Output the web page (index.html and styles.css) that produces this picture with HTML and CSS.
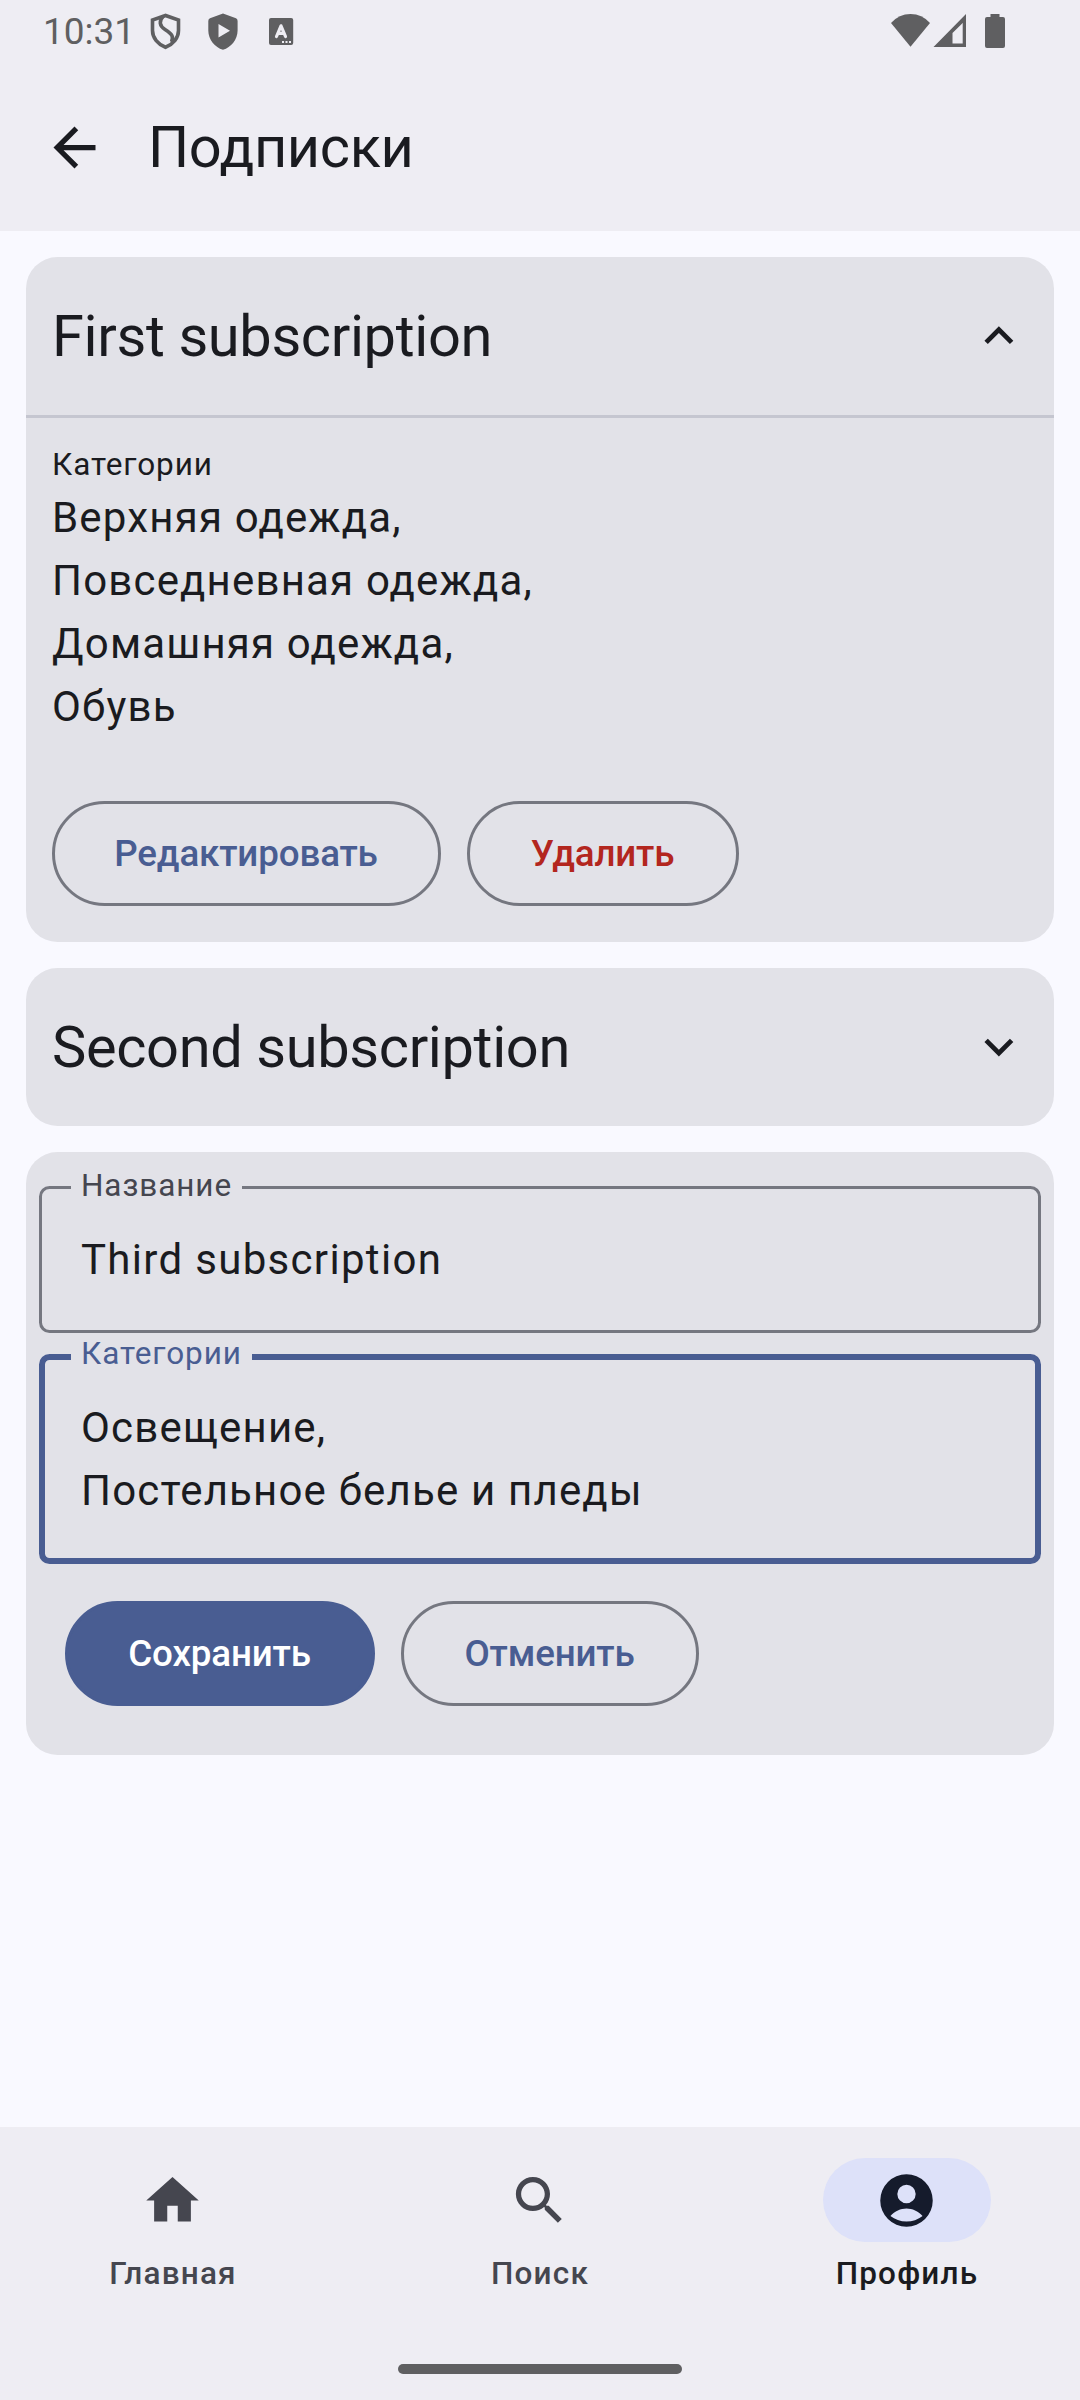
FILE: index.html
```html
<!DOCTYPE html>
<html lang="ru">
<head>
<meta charset="utf-8">
<title>Подписки</title>
<link rel="stylesheet" href="styles.css">
</head>
<body>
<div class="screen">
  <header class="top">
    <div class="status">
      <span class="clock">10:31</span>
      <svg class="status-left" width="160" height="40" viewBox="145 10 160 40" fill="#5f5f61">
        <path d="M165.500 15.500 152.500 20V30.500C152.500 38 158 44.500 165.500 47.300 173 44.500 178.500 38 178.500 30.500V20Z" fill="none" stroke="#5f5f61" stroke-width="3.600"/>
        <path d="M163.500 16C158.500 21 159.500 26 165 29.500 172 34 174 36.500 171.500 42" fill="none" stroke="#5f5f61" stroke-width="3.600"/>
        <path fill-rule="evenodd" d="M223 13.500 236 18.300Q237.600 19 237.600 21V30.500C237.600 39.500 231 47.500 223 49.800 215 47.500 208.300 39.500 208.300 30.500V21Q208.300 19 210 18.300ZM218.500 24V37.500L230 30.800Z"/>
        <rect x="269" y="18" width="24.200" height="27" rx="2"/>
        <path d="M276.500 36.500 281 25.800 285.500 36.500M278 33.300H284" fill="none" stroke="#eeedf3" stroke-width="3.200" stroke-linecap="round" stroke-linejoin="round"/>
        <path d="M282 41h2v2h-2zM285.500 41h2v2h-2zM289 41h2v2h-2z" fill="#eeedf3"/>
      </svg>
      <svg class="status-right" width="120" height="40" viewBox="888 10 120 40" fill="#5f5f61">
        <path d="M891 23Q899 14 910.500 14T930 23L910.500 46.700Z"/>
        <path fill-rule="evenodd" d="M966 14V47H933.500ZM962.700 23 952.500 33V43.500H962.700Z"/>
        <path d="M990.500 14H999.500V17H1003Q1005 17 1005 19V46Q1005 48 1003 48H987Q985 48 985 46V19Q985 17 987 17H990.500Z"/>
      </svg>
    </div>
    <div class="appbar">
      <svg width="63" height="63" viewBox="0 0 24 24" fill="#1a1b20"><path d="M20 11H7.830l5.590-5.590L12 4l-8 8 8 8 1.410-1.410L7.830 13H20z"/></svg>
      <h1 class="title">Подписки</h1>
    </div>
  </header>

  <main class="list">
    <section class="card">
      <div class="card-head divided">
        <h2 class="title">First subscription</h2>
        <svg class="chevron" viewBox="0 0 24 24"><path d="M12 8l-6 6 1.410 1.410L12 10.830l4.590 4.580L18 14z"/></svg>
      </div>
      <div class="details">
        <div class="caption">Категории</div>
        <div class="text">Верхняя одежда,<br>Повседневная одежда,<br>Домашняя одежда,<br>Обувь</div>
        <div class="actions">
          <button class="btn edit">Редактировать</button>
          <button class="btn danger">Удалить</button>
        </div>
      </div>
    </section>

    <section class="card">
      <div class="card-head">
        <h2 class="title">Second subscription</h2>
        <svg class="chevron" viewBox="0 0 24 24"><path d="M16.590 8.590L12 13.170 7.410 8.590 6 10l6 6 6-6z"/></svg>
      </div>
    </section>

    <section class="card form">
      <div class="field">
        <span class="field-label">Название</span>
        <div class="text latin">Third subscription</div>
      </div>
      <div class="field focused">
        <span class="field-label">Категории</span>
        <div class="text">Освещение,<br>Постельное белье и пледы</div>
      </div>
      <div class="actions">
        <button class="btn filled">Сохранить</button>
        <button class="btn cancel">Отменить</button>
      </div>
    </section>
  </main>

  <footer class="bottom">
    <nav class="nav">
      <a class="nav-item">
        <span class="pill"><svg width="63" height="63" viewBox="0 0 24 24"><path d="M10 20v-6h4v6h5v-8h3L12 3 2 12h3v8z"/></svg></span>
        <span>Главная</span>
      </a>
      <a class="nav-item">
        <span class="pill"><svg width="63" height="63" viewBox="0 0 24 24"><path d="M15.500 14h-.79l-.28-.27C15.410 12.590 16 11.110 16 9.500 16 5.910 13.090 3 9.500 3S3 5.910 3 9.500 5.910 16 9.500 16c1.610 0 3.090-.59 4.230-1.570l.27.28v.79l5 4.990L20.490 19l-4.990-5zm-6 0C7.010 14 5 11.990 5 9.500S7.010 5 9.500 5 14 7.010 14 9.500 11.990 14 9.500 14z"/></svg></span>
        <span>Поиск</span>
      </a>
      <a class="nav-item active">
        <span class="pill"><svg width="63" height="63" viewBox="0 0 24 24"><path fill-rule="evenodd" d="M12 2a10 10 0 1 0 0 20 10 10 0 0 0 0-20zm0 4a3.500 3.500 0 1 1 0 7 3.500 3.500 0 0 1 0-7zm0 14c-2.320 0-4.430-.8-6.120-2.120C7.550 16.030 9.770 15 12 15s4.450 1.030 6.120 2.880A9.950 9.950 0 0 1 12 20z"/></svg></span>
        <span>Профиль</span>
      </a>
    </nav>
    <div class="handle"></div>
  </footer>
</div>
</body>
</html>
```
FILE: styles.css
```css
* { box-sizing: border-box; }
body {
  margin: 0;
  font-family: Roboto, sans-serif;
  color: #1a1b20;
  background: #f9f9ff;
}
svg { display: block; flex: none; }
.screen {
  width: 1080px;
  height: 2400px;
  display: flex;
  flex-direction: column;
}
.top { height: 231px; background: #eeedf3; }
.status {
  height: 63px;
  display: flex;
  align-items: flex-start;
  padding: 10px 72px 0 43px;
  color: #5f5f61;
}
.clock { width: 102px; padding-top: 1px; font-size: 37px; line-height: 42px; }
.status-right { margin-left: auto; }
.appbar {
  height: 168px;
  display: flex;
  align-items: center;
  gap: 42px;
  padding: 0 43px;
}
.title {
  margin: 0;
  padding-top: 2px;
  font-size: 57.75px;
  line-height: 73.5px;
  font-weight: 400;
  letter-spacing: -.36px;
}
.list {
  flex: 1;
  display: flex;
  flex-direction: column;
  gap: 26px;
  padding: 26px;
}
.card { background: #e2e2e8; border-radius: 31.5px; }
.card-head {
  height: 158px;
  display: flex;
  align-items: center;
  justify-content: space-between;
  padding: 0 26px;
}
.divided { height: 161px; border-bottom: 3px solid #c5c6d0; }
.chevron { width: 57.75px; height: 57.75px; fill: #1a1b20; }
.details { padding: 26px 26px 36px; }
.caption { font-size: 31.5px; line-height: 42px; letter-spacing: .9px; }
.text { font-size: 42px; line-height: 63px; letter-spacing: 1.18px; }
.latin { letter-spacing: 1.3125px; }
.actions { display: flex; gap: 26px; }
.details .actions { margin-top: 63px; }
.btn {
  width: 272px;
  height: 105px;
  padding: 2px 1px 0 0;
  border: 3px solid #757780;
  border-radius: 53px;
  background: none;
  color: #495d92;
  font: 500 36.75px/52.5px Roboto, sans-serif;
  letter-spacing: -.15px;
}
.edit { width: 389px; }
.cancel { width: 298px; }
.danger { color: #b3261e; }
.filled { width: 310px; background: #495d92; border-color: #495d92; color: #fff; }
.form { padding: 34px 13px 49px; }
.form .actions { margin-top: 37px; padding-left: 26px; }
.field {
  position: relative;
  height: 147px;
  padding: 39px;
  border: 3px solid #757780;
  border-radius: 10.5px;
}
.focused {
  height: 210px;
  margin-top: 21px;
  padding: 36px;
  border: 6px solid #495d92;
}
.field-label {
  position: absolute;
  top: -21px;
  left: 29px;
  padding: 0 10px;
  background: #e2e2e8;
  color: #45464f;
  font-size: 31.5px;
  line-height: 36px;
  letter-spacing: .9px;
}
.focused .field-label { top: -24px; left: 26px; color: #495d92; }
.bottom {
  height: 273px;
  background: #eeedf3;
  display: flex;
  flex-direction: column;
  align-items: center;
}
.nav { width: 100%; height: 237px; display: flex; gap: 21px; padding-top: 31px; }
.nav-item {
  flex: 1;
  display: flex;
  flex-direction: column;
  align-items: center;
  gap: 11px;
  color: #45464f;
  font-size: 31.5px;
  line-height: 42px;
  font-weight: 500;
  letter-spacing: 1.2px;
}
.pill {
  width: 168px;
  height: 84px;
  display: flex;
  align-items: center;
  justify-content: center;
  padding-right: 1.5px;
  border-radius: 42px;
}
.pill svg { fill: #45464f; }
.active { color: #1a1b20; }
.active .pill { background: #dde1f9; }
.active .pill svg { fill: #151b2c; }
.handle { width: 284px; height: 10px; border-radius: 5px; background: #5f5f61; }
```
